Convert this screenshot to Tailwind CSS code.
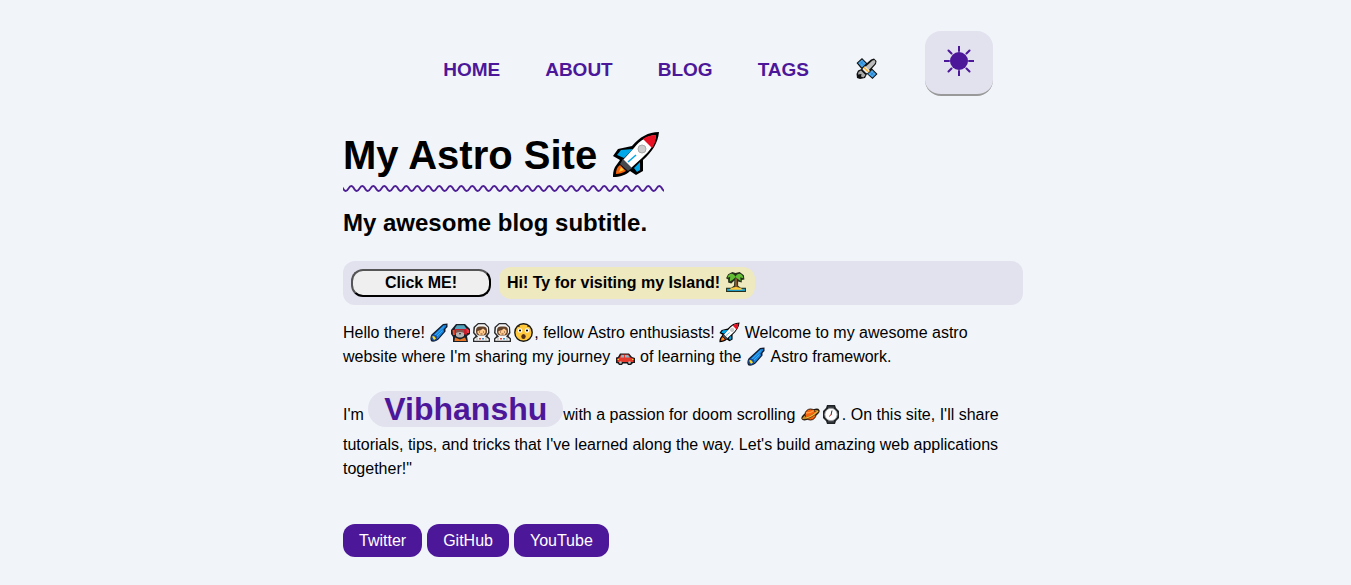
<!DOCTYPE html>
<html lang="en">
<head>
<meta charset="utf-8">
<meta name="viewport" content="width=device-width, initial-scale=1">
<title>My Astro Site</title>
<script src="https://cdn.jsdelivr.net/npm/@tailwindcss/browser@4"></script>
</head>
<body class="min-h-screen bg-slate-100 font-['Liberation_Sans',Arial,sans-serif] text-base text-black">

<svg class="hidden" aria-hidden="true">
  <symbol id="rocket" viewBox="4 4 48 48">
    <path d="M51 5C40 5 32 10 24 19L10 22 5 29 12 33 7 40C5 44 5 47 5 50 12 50 18 48 22 44L28 48 35 44 35 33C44 25 50 16 51 5Z" fill="#000"/>
    <path d="M25 22L13 23 9 28 16 31ZM26 41L29 45 32 43 32 35Z" fill="#00a8e8"/>
    <path d="M48 8C39 9 32 13 26 21L15 33 23 41 34 31C42 24 47 17 48 8Z" fill="#fff"/>
    <path d="M48 8C43 8 39 9 35 12L44 21C47 17 48 13 48 8Z" fill="#e81224"/>
    <path d="M15 32L12 37 20 44 24 41Z" fill="#464b50"/>
    <path d="M12 38L18 44C15 46 11 47 8 47 8 43 9 40 12 38Z" fill="#f7630c"/>
    <path d="M13 40L16 43 11 45Z" fill="#ffc83d"/>
    <circle cx="34" cy="22" r="4" fill="#ccc" stroke="#aaa"/>
    <path d="M28 28L20 35" stroke="#00a8e8" stroke-width="1.500"/>
  </symbol>
  <symbol id="satellite" viewBox="0 0 26 26">
    <path d="M2.500 7L8 2 13 7 17 3.500 20 2.500 22.500 5 22 8 18 12.500 23.500 18 18.500 23 13 18 11 22 6 23 3 22 2.500 18 4 14.500 7.500 13Z" fill="#111"/>
    <path d="M4 7L8 3.500 12 7.500 8 11.500ZM14 18L18 14 22 18 18.500 21.500Z" fill="#48a5ec"/>
    <path d="M6 5.300L10 9.300M5.500 9L9.500 5M16 16L20.500 20M16 20L20 16" stroke="#2477b8" stroke-width=".6"/>
    <path d="M18.500 4.500L20.500 4 21.500 6 20.500 8 12 17 8.500 13.500Z" fill="#bbb"/>
    <path d="M11 10L16 15 13 17.500 8.500 13Z" fill="#eee"/>
    <path d="M10 11.500L14.500 16" stroke="#ffb52b" stroke-width="1.600"/>
    <path d="M4.500 16L7 14.500 11.500 19 9.500 21.500 7 20.500 7.500 18 4 18.500Z" fill="#aaa"/>
  </symbol>
  <symbol id="island" viewBox="0 0 21 21">
    <path d="M1 16H6L8.500 14 9 9 6 12 3 11 3 8 1 7 3 3 7 1 10 2 14 1 18 4 18.500 8 16 8.500 16 11 12.500 10 12.500 14 15 16H20V20H1Z" fill="#26301b"/>
    <path d="M10 5.500C8 1 3 2 2.500 6.500L5 5.500 4.500 10 7 8.500 10 6 13 8 15 9.500 14.500 6 17.500 7C17 2 12 1 10 5.500Z" fill="#62bd35"/>
    <path d="M9.700 7H11.300L12 16H9.200Z" fill="#805530"/>
    <path d="M2 17H19V19H2Z" fill="#20a6d9"/>
    <path d="M4 18C7 14.500 14 14.500 17 18Z" fill="#ffc83d"/>
  </symbol>
  <symbol id="comet" viewBox="0 0 21 21">
    <path d="M18.500 1.500L14 2 2.500 12.500C1 15 1 18 2.500 19.500 5 20 8 19 9.500 17.500L16.500 9.500 16.500 7 18.500 5Z" fill="#111b2d"/>
    <path d="M17.300 3L14.500 3.200 4 13 8.500 17 15 9.500 14.500 7.500 17 4.500Z" fill="#1684df"/>
    <path d="M15 4.500L6 13M13.500 8.500L8 14" stroke="#46b4f2" stroke-width=".8"/>
    <circle cx="5.200" cy="15.800" r="3" fill="#174ea2"/>
    <path d="M3 14.500L5 18 7 16.500 5 14Z" fill="#ffdc22"/>
  </symbol>
  <symbol id="masked-cat" viewBox="0 0 21 21">
    <path d="M3.500 5L6 2 15 2 18 5 20 7 20 12 17 14 18 20 3 20 3 15 1 12 1 8Z" fill="#17202a"/>
    <path d="M5 6L7 3.300H14L16 6V9H5Z" fill="#55a2bd"/>
    <path d="M2.500 8H5V13H3Z" fill="#e85b22"/>
    <path d="M4.500 7H17V12.500H4.500Z" fill="#c51e2d"/>
    <path d="M6 8H14V11H6Z" fill="#86534d"/>
    <path d="M6 11Q10 9 14 11V14Q10 17 6 14Z" fill="#b5b5b5"/>
    <path d="M9 11H11L10 13Z" fill="#222"/>
    <path d="M5 15.500L10 17.500 15 15.500 16.500 19H4.500Z" fill="#e87526"/>
    <path d="M16 6L19 8V11H17Z" fill="#ed3548"/>
  </symbol>
  <symbol id="astronaut" viewBox="0 0 21 21">
    <path d="M7 1H14L18 5 18.500 11 16.500 14 19 16.500V20H2V16.500L4.500 14 2 11 2.500 5Z" fill="#2b2b2d"/>
    <path d="M7.500 2.200H13.500L17 5.500V10.500L14 14.500 17.700 17V18.800H3.300V17L7 14.500 3.500 10.500 4 5.500Z" fill="#f4f4f4"/>
    <rect x="5" y="4.500" width="11" height="9" rx="4" fill="#65432b"/>
    <path d="M6.500 9Q10 8.500 12 6.500L14.500 8.500V10.500L12.500 13H8.500L6.500 11Z" fill="#ffc98c"/>
    <path d="M8 10H9M12 10H13M9.500 12H11.500" stroke="#4d2d20" stroke-width=".8"/>
    <path d="M6 15.500V18.500M15 15.500V18.500" stroke="#aaa"/>
    <path d="M8 16H10V17.500H8Z" fill="#e34935"/><path d="M11 16H13V17.500H11Z" fill="#3295d5"/>
  </symbol>
  <symbol id="wow" viewBox="0 0 21 21">
    <circle cx="10.500" cy="10.500" r="8.700" fill="#ffc83d" stroke="#181711" stroke-width="1.400"/>
    <circle cx="7" cy="8.500" r="2.200" fill="#fff"/><circle cx="14" cy="8.500" r="2.200" fill="#fff"/>
    <circle cx="7" cy="8.500" r="1.100"/><circle cx="14" cy="8.500" r="1.100"/>
    <path d="M5 4.500L7 4M14 4L16 4.500" stroke="#493410"/>
    <ellipse cx="10.500" cy="14.500" rx="2.200" ry="2.600" fill="#54301b"/>
  </symbol>
  <symbol id="car" viewBox="0 0 21 21">
    <path d="M5 7.500H14L17 11 20 12V17H18L16 19H13L12 17.500H8L7 19H4L3 17.500 1 17V11.500L3 11Z" fill="#161819"/>
    <path d="M6 8.500H13.500L15.500 11.500 18.500 12.500V16H2.500V12.500L4.500 11.500Z" fill="#e43b2e"/>
    <path d="M6.500 9H9V11.500H5.500ZM10 9H13L14.500 11.500H10Z" fill="#8bb8c9"/>
    <circle cx="5.500" cy="16.500" r="1.300" fill="#bbb"/><circle cx="14.500" cy="16.500" r="1.300" fill="#bbb"/>
    <path d="M2.500 13H4V14H2.500ZM17 13H18.500V14H17Z" fill="#ffc83d"/>
  </symbol>
  <symbol id="planet" viewBox="0 0 21 21">
    <ellipse cx="10.500" cy="10.500" rx="9.300" ry="3" transform="rotate(-27 10.500 10.500)" fill="#e2a72b" stroke="#20180f" stroke-width="1.400"/>
    <circle cx="10.500" cy="10.500" r="5.500" fill="#f7630c" stroke="#2b1a10"/>
    <path d="M6 9Q11 9 14 6.500" stroke="#ff9b42" stroke-width="1.300" fill="none"/>
    <path d="M2.500 14.500Q10 15 18.500 7" stroke="#6b4418" stroke-width="2" fill="none"/>
    <path d="M2.500 14.300Q10 14.500 18 7" stroke="#f3b73a" stroke-width="1.100" fill="none"/>
  </symbol>
  <symbol id="watch" viewBox="0 0 21 21">
    <path d="M6 1H14L15 4 18 7V14L15 17 14 20H6L5 17 2 14V7L5 4Z" fill="#202326"/>
    <path d="M7 2.500H13V4H7ZM7 17H13V18.500H7Z" fill="#3d4145"/>
    <circle cx="10" cy="10.500" r="6.200" fill="#fff" stroke="#9b9da0"/>
    <path d="M11 6.500L10 11" stroke="#333"/><path d="M10.500 10.500L8 12.500" stroke="#dd3434"/>
  </symbol>
</svg>

<div class="mx-auto max-w-[697px] pt-[31px] pr-px pb-6 pl-4">
  <header class="flex items-start justify-end gap-[45px] pr-[30px]">
    <nav class="flex flex-wrap gap-[45px] pt-[25px] text-[19px] leading-7 font-bold text-violet-900 uppercase" aria-label="Main">
      <a href="#home">Home</a>
      <a href="#about">About</a>
      <a href="#blog">Blog</a>
      <a href="#tags">Tags</a>
      <a href="#space" aria-label="Space"><svg class="size-[26px]"><use href="#satellite"/></svg></a>
    </nav>
    <button type="button" aria-label="Toggle theme" class="flex h-[65px] w-[68px] justify-center rounded-2xl border-b-2 border-[#999] bg-[#e2e1ee] pt-[15px] text-violet-900">
      <svg class="size-[30px]" viewBox="0 0 30 30" fill="none" stroke="currentColor" stroke-width="2">
        <circle cx="15" cy="15" r="9" fill="currentColor" stroke="none"/>
        <path d="M15 0V5M15 25V30M0 15H5M25 15H30M4.500 4.500L7.500 7.500M22.500 22.500L25.500 25.500M25.500 4.500L22.500 7.500M7.500 22.500L4.500 25.500" stroke-linecap="round"/>
      </svg>
    </button>
  </header>

  <main class="pt-[30px]">
    <div class="w-fit">
      <h1 class="flex items-center gap-[15px] pr-1 text-[40px] leading-[58px] font-bold">My Astro Site <svg class="size-12" role="img" aria-label="rocket"><use href="#rocket"/></svg></h1>
      <svg class="h-2 w-full" aria-hidden="true">
        <defs><pattern id="wave" width="11" height="8" patternUnits="userSpaceOnUse"><path d="M-2.750 2C0 2 0 7 2.750 7S5.500 2 8.250 2 11 7 13.750 7" fill="none" stroke="#4c1d95" stroke-width="1.800"/></pattern></defs>
        <rect width="100%" height="8" fill="url(#wave)"/>
      </svg>
    </div>
    <h2 class="mt-[13px] text-2xl leading-9 font-bold">My awesome blog subtitle.</h2>

    <div class="mt-5 flex items-center gap-2 rounded-xl bg-[#e2e1ee] px-2 py-[5px] font-bold">
      <button type="button" class="h-7 w-[140px] rounded-xl border-2 border-t-[#555] border-r-black border-b-black border-l-[#555] bg-[#efefef] leading-6">Click ME!</button>
      <span class="my-px rounded-xl bg-[#eee9bf] px-2 py-1">Hi! Ty for visiting my Island! <svg class="inline-block size-[22px] align-[-5px]" role="img" aria-label="island"><use href="#island"/></svg></span>
    </div>

    <p class="mt-4 leading-6">Hello there! <svg class="inline-block size-[21px] align-[-5px]"><use href="#comet"/></svg><svg class="inline-block size-[21px] align-[-5px]"><use href="#masked-cat"/></svg><svg class="inline-block size-[21px] align-[-5px]"><use href="#astronaut"/></svg><svg class="inline-block size-[21px] align-[-5px]"><use href="#astronaut"/></svg><svg class="inline-block size-[21px] align-[-5px]"><use href="#wow"/></svg>, fellow Astro enthusiasts! <svg class="inline-block size-[21px] align-[-5px]"><use href="#rocket"/></svg> Welcome to my awesome astro website where I'm sharing my journey <svg class="inline-block size-[21px] align-[-5px]"><use href="#car"/></svg> of learning the <svg class="inline-block size-[21px] align-[-5px]"><use href="#comet"/></svg> Astro framework.</p>

    <p class="mt-4 leading-6">I'm <span class="rounded-full bg-[#e2e1ee] px-4 text-[32px] leading-[48px] font-bold text-violet-900">Vibhanshu</span>with a passion for doom scrolling <svg class="inline-block size-[21px] align-[-5px]"><use href="#planet"/></svg><svg class="inline-block size-[21px] align-[-5px]"><use href="#watch"/></svg>. On this site, I'll share tutorials, tips, and tricks that I've learned along the way. Let's build amazing web applications together!"</p>
  </main>

  <footer class="mt-[43px] flex flex-wrap gap-[5px] leading-[33px] text-white">
    <a href="#twitter" class="rounded-xl bg-violet-900 px-4">Twitter</a>
    <a href="#github" class="rounded-xl bg-violet-900 px-4">GitHub</a>
    <a href="#youtube" class="rounded-xl bg-violet-900 px-4">YouTube</a>
  </footer>
</div>
</body>
</html>
